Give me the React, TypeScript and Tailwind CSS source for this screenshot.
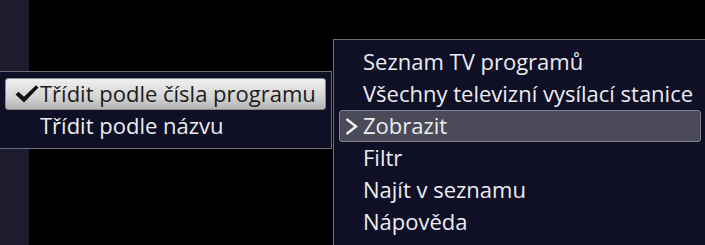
const font = { fontFamily: '"Open Sans", "Noto Sans", sans-serif' };

const Check = () => (
  <svg width="24" height="18" viewBox="0 0 24 18" className="shrink-0">
    <path d="M0.5 9.5 L3.5 6.8 L9 11.8 L21 0.3 L23.5 2.6 L9 17.5 Z" fill="#111" />
  </svg>
);

const Chevron = () => (
  <svg width="13" height="17" viewBox="0 0 13 17" className="shrink-0">
    <polyline points="1.5,1 11,8.5 1.5,16" fill="none" stroke="#f2f2f2" strokeWidth="2.4" />
  </svg>
);

type Row = { label: string; active?: boolean };

const left: Row[] = [
  { label: "Třídit podle čísla programu", active: true },
  { label: "Třídit podle názvu" },
];

const right: Row[] = [
  { label: "Seznam TV programů" },
  { label: "Všechny televizní vysílací stanice" },
  { label: "Zobrazit", active: true },
  { label: "Filtr" },
  { label: "Najít v seznamu" },
  { label: "Nápověda" },
];

export default function App() {
  return (
    <div
      className="w-[705px] h-[245px] overflow-hidden flex items-start bg-[linear-gradient(to_right,#1c1c2e_29px,#000_29px)] text-[22px] leading-none text-[#ececf0]"
      style={font}
    >
      <div className="mt-[71px] w-[332px] shrink-0 bg-[#0f0f26] border-t border-b border-r border-[#6c6c7c] pl-[5px] pr-[5px] pt-[6px] pb-[6px]">
        {left.map((r) =>
          r.active ? (
            <div
              key={r.label}
              className="h-[32px] flex items-center rounded-[3px] border border-[#8a8a8a] bg-[linear-gradient(to_bottom,#f0f0f0,#d4d4d4_60%,#b4b4b4)] text-[#1c1c1c]"
            >
              <div className="w-[34px] flex justify-end pr-[1px]">
                <Check />
              </div>
              <span className="pb-[2px]">{r.label}</span>
            </div>
          ) : (
            <div key={r.label} className="h-[32px] flex items-center pl-[35px] pb-[2px]">
              {r.label}
            </div>
          )
        )}
      </div>
      <div className="mt-[39px] ml-[1px] flex-1 h-[230px] bg-[#0f0f26] border-t border-l border-[#6c6c7c] pl-[5px] pr-[4px] pt-[6px]">
        {right.map((r) =>
          r.active ? (
            <div
              key={r.label}
              className="h-[32px] flex items-center rounded-[3px] border border-[#83838f] bg-[#4a4a58]"
            >
              <div className="w-[23px] flex justify-center">
                <Chevron />
              </div>
              <span className="pb-[2px]">{r.label}</span>
            </div>
          ) : (
            <div key={r.label} className="h-[32px] flex items-center pl-[24px] pb-[2px]">
              {r.label}
            </div>
          )
        )}
      </div>
    </div>
  );
}
